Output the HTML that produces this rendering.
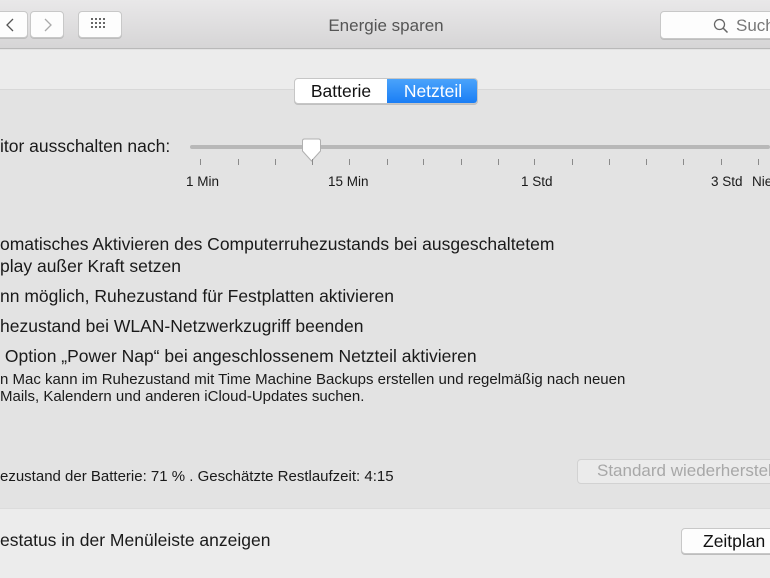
<!DOCTYPE html>
<html><head><meta charset="utf-8"><style>
*{margin:0;padding:0;box-sizing:border-box}
body{width:770px;height:578px;overflow:hidden;background:#e3e3e3;font-family:"Liberation Sans",sans-serif;color:#1a1a1a;position:relative}
.a{position:absolute;white-space:nowrap}
.tb{position:absolute;left:0;top:0;width:770px;height:49px;background:linear-gradient(#e9e8e9,#d6d5d6);border-bottom:1px solid #b9b9b9}
.btn{position:absolute;background:#fdfdfd;border:1px solid #c8c8c8;border-radius:4px;box-shadow:0 1px 0 #bdbdbd}
.t{font-size:17.5px}
.s{font-size:15px}
.tick{position:absolute;top:159px;width:1px;height:6px;background:#8a8a8a}
.l{font-size:13.5px}
</style></head><body>
<div class="tb"></div>
<div class="btn" style="left:-6px;top:11px;width:34px;height:27px"></div>
<div class="btn" style="left:30px;top:11px;width:34px;height:27px"></div>
<svg class="a" style="left:0;top:14px" width="70" height="22"><path d="M13 5 L7 11 L13 17" stroke="#555" stroke-width="1.3" fill="none"/><path d="M45 5 L51 11 L45 17" stroke="#aaa" stroke-width="1.3" fill="none"/></svg>
<div class="btn" style="left:78px;top:11px;width:44px;height:27px"></div>
<svg class="a" style="left:90px;top:17px" width="20" height="14" fill="#666"><g><rect x="1" y="1" width="2" height="2"/><rect x="5" y="1" width="2" height="2"/><rect x="9" y="1" width="2" height="2"/><rect x="13" y="1" width="2" height="2"/><rect x="1" y="5" width="2" height="2"/><rect x="5" y="5" width="2" height="2"/><rect x="9" y="5" width="2" height="2"/><rect x="13" y="5" width="2" height="2"/><rect x="1" y="9" width="2" height="2"/><rect x="5" y="9" width="2" height="2"/><rect x="9" y="9" width="2" height="2"/><rect x="13" y="9" width="2" height="2"/></g></svg>
<div class="a" style="left:0;width:772px;top:16px;text-align:center;font-size:17px;color:#555">Energie sparen</div>
<div class="btn" style="left:660px;top:11px;width:120px;height:28px"></div>
<svg class="a" style="left:712px;top:17px" width="20" height="20"><circle cx="7.5" cy="7.5" r="5" stroke="#666" stroke-width="1.3" fill="none"/><path d="M11 11 L15.5 15.5" stroke="#666" stroke-width="1.5"/></svg>
<div class="a" style="left:736px;top:16px;font-size:17px;color:#777">Such</div>
<div class="a" style="left:0;top:50px;width:770px;height:40px;background:#ececec;border-bottom:1px solid #d8d8d8"></div>
<div class="a" style="left:294px;top:78px;width:184px;height:26px;border-radius:4px;background:#fff;border:1px solid #c6c6c6;box-shadow:0 1px 0 #c0c0c0;overflow:hidden">
<div class="a" style="left:0;top:0;width:92px;height:24px;text-align:center;line-height:25px;font-size:17.5px;color:#111">Batterie</div>
<div class="a" style="left:92px;top:0;width:92px;height:24px;background:linear-gradient(#4aa3fb,#1a7ef5);color:#fff;text-align:center;line-height:25px;font-size:17.5px">Netzteil</div></div>
<div class="a t" style="left:0;top:136px">itor ausschalten nach:</div>
<div class="a" style="left:190px;top:145px;width:580px;height:4px;border-radius:2px;background:#b8b8b8"></div>
<svg class="a" style="left:300px;top:138px" width="24" height="26"><path d="M2.5 3 Q2.5 1 4.5 1 L18.5 1 Q20.5 1 20.5 3 L20.5 13 L11.5 23 L2.5 13 Z" fill="#fff" stroke="#b0b0b0"/></svg>
<div class="tick" style="left:200px"></div><div class="tick" style="left:238px"></div><div class="tick" style="left:275px"></div><div class="tick" style="left:312px"></div><div class="tick" style="left:349px"></div><div class="tick" style="left:387px"></div><div class="tick" style="left:423px"></div><div class="tick" style="left:461px"></div><div class="tick" style="left:498px"></div><div class="tick" style="left:534px"></div><div class="tick" style="left:572px"></div><div class="tick" style="left:609px"></div><div class="tick" style="left:646px"></div><div class="tick" style="left:683px"></div><div class="tick" style="left:721px"></div><div class="tick" style="left:758px"></div>
<div class="a l" style="left:186px;top:174px">1 Min</div>
<div class="a l" style="left:328px;top:174px">15 Min</div>
<div class="a l" style="left:521px;top:174px">1 Std</div>
<div class="a l" style="left:711px;top:174px">3 Std</div>
<div class="a l" style="left:752px;top:174px">Nie</div>
<div class="a t" style="left:0;top:234px">omatisches Aktivieren des Computerruhezustands bei ausgeschaltetem</div>
<div class="a t" style="left:0;top:256px">play außer Kraft setzen</div>
<div class="a t" style="left:0;top:286px">nn möglich, Ruhezustand für Festplatten aktivieren</div>
<div class="a t" style="left:0;top:316px">hezustand bei WLAN-Netzwerkzugriff beenden</div>
<div class="a t" style="left:0;top:346px">&nbsp;Option „Power Nap“ bei angeschlossenem Netzteil aktivieren</div>
<div class="a s" style="left:0;top:371px">n Mac kann im Ruhezustand mit Time Machine Backups erstellen und regelmäßig nach neuen</div>
<div class="a s" style="left:0;top:388px">Mails, Kalendern und anderen iCloud-Updates suchen.</div>
<div class="a s" style="left:0;top:468px">ezustand der Batterie: 71 % . Geschätzte Restlaufzeit: 4:15</div>
<div class="a" style="left:577px;top:459px;width:210px;height:25px;border-radius:4px;background:#ebebeb;border:1px solid #d2d2d2"></div>
<div class="a" style="left:597px;top:461px;font-size:17px;color:#a8a8a8">Standard wiederherstellen</div>
<div class="a" style="left:0;top:508px;width:770px;height:70px;background:#ececec;border-top:1px solid #dcdcdc"></div>
<div class="a t" style="left:0;top:530px">estatus in der Menüleiste anzeigen</div>
<div class="btn" style="left:681px;top:528px;width:100px;height:26px"></div>
<div class="a" style="left:703px;top:531px;font-size:17.5px;color:#111">Zeitplan</div>
</body></html>
